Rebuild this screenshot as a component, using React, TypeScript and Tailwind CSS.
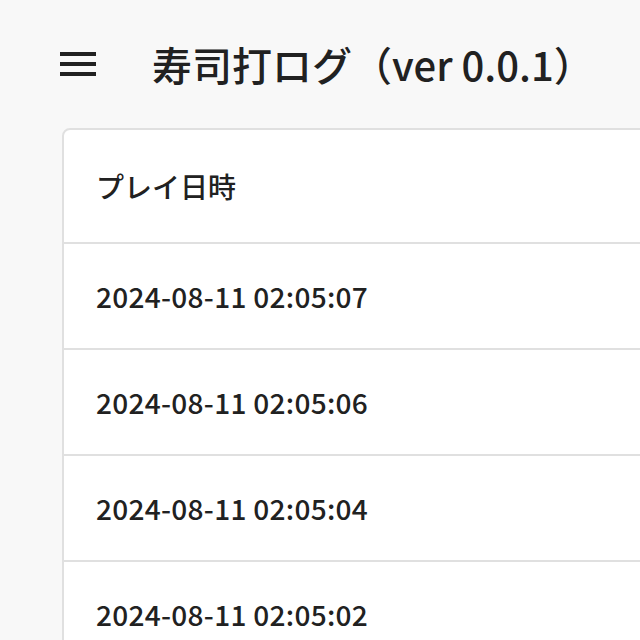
const rows = [
  "2024-08-11 02:05:07",
  "2024-08-11 02:05:06",
  "2024-08-11 02:05:04",
  "2024-08-11 02:05:02",
  "2024-08-11 02:04:58",
];

function MenuIcon() {
  return (
    <svg viewBox="0 0 24 24" className="h-12 w-12" fill="#212121">
      <path d="M3 18h18v-2H3v2zm0-5h18v-2H3v2zm0-7v2h18V6H3z" />
    </svg>
  );
}

export default function App() {
  return (
    <div
      className="h-[640px] w-[640px] overflow-hidden bg-[#f8f8f8] text-[#212121]"
      style={{ fontFamily: '"Noto Sans CJK JP", "Noto Sans", sans-serif' }}
    >
      <header className="flex h-[128px] items-center pl-[54px]">
        <button className="flex h-12 w-12 items-center justify-center">
          <MenuIcon />
        </button>
        <h1 className="ml-[50px] text-[40px] font-medium leading-none tracking-normal">
          寿司打ログ（ver 0.0.1）
        </h1>
      </header>

      <div className="ml-[62px] w-[700px] overflow-hidden rounded-t-[8px] border-2 border-[#e0e0e0] bg-white">
        <table className="w-full border-collapse">
          <thead>
            <tr className="border-b-2 border-[#e0e0e0]">
              <th className="px-[32px] py-[32px] text-left text-[28px] font-medium leading-[48px]">
                プレイ日時
              </th>
            </tr>
          </thead>
          <tbody>
            {rows.map((r) => (
              <tr key={r} className="border-b-2 border-[#e0e0e0]">
                <td className="px-[32px] py-[32px] text-[28px] font-medium leading-[40px] tracking-[0.3px]">
                  {r}
                </td>
              </tr>
            ))}
          </tbody>
        </table>
      </div>
    </div>
  );
}
